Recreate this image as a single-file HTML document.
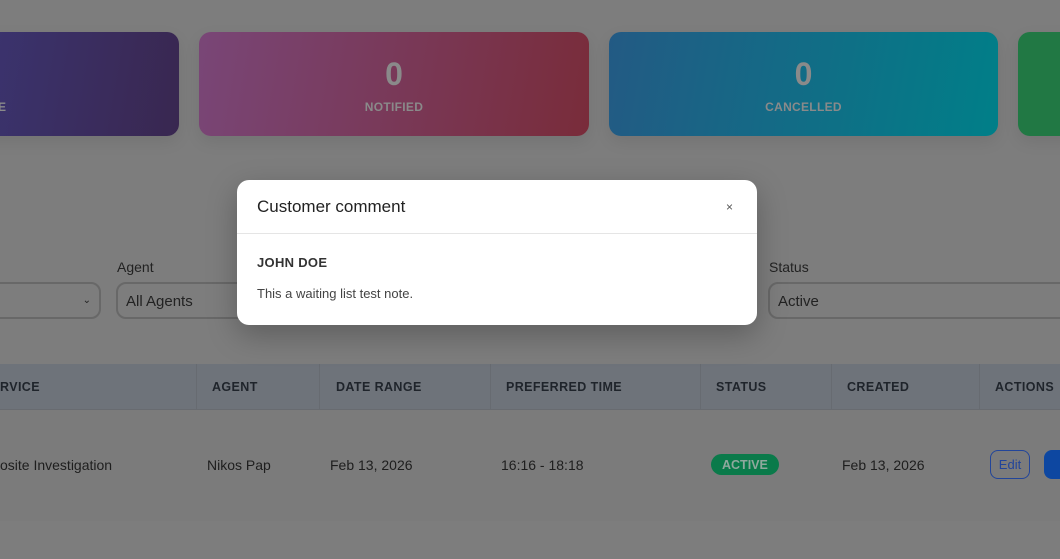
<!DOCTYPE html>
<html><head><style>
*{box-sizing:border-box;margin:0;padding:0}
body{width:1060px;height:559px;overflow:hidden;background:#7d7d7d;font-family:"Liberation Sans",sans-serif;position:relative}
.card{position:absolute;top:32px;height:104px;border-radius:12px;color:#8a8a8a;text-align:center;box-shadow:0 6px 16px rgba(0,0,0,.08)}
.card .n{font-size:32px;font-weight:bold;margin-top:24px;line-height:36px}
.card .l{font-size:12px;font-weight:bold;margin-top:8px;letter-spacing:.3px}
.lab{position:absolute;top:259px;font-size:14px;color:#222}
.sel{position:absolute;top:282px;height:37px;border:2px solid #686868;border-radius:10px;font-size:15px;color:#222;padding:9px 8px}
.th{position:absolute;top:364px;height:46px;left:0;width:1060px;background:#6e737a;border-bottom:1px solid #686b70}
.th span{position:absolute;top:16px;font-size:12.5px;font-weight:bold;color:#1f242b;letter-spacing:.4px}
.th i{position:absolute;top:0;width:1px;height:46px;background:#676b71}
.row{position:absolute;top:410px;height:111px;left:0;width:1060px;background:#7b7b7b}
.row span{position:absolute;top:47px;font-size:14px;color:#1e1e1e}
.modal{position:absolute;left:237px;top:180px;width:520px;height:145px;background:#fff;border-radius:12px;box-shadow:0 10px 30px rgba(0,0,0,.25)}
</style></head><body>
<div class="card" style="left:-20px;width:199px;background:linear-gradient(100deg,#3b3470,#392750)"><div class="l" style="margin-top:68px;text-align:left;padding-left:18px">E</div></div>
<div class="card" style="left:199px;width:390px;background:linear-gradient(100deg,#794677,#792c3a)"><div class="n">0</div><div class="l">NOTIFIED</div></div>
<div class="card" style="left:609px;width:389px;background:linear-gradient(100deg,#235a84,#007f88)"><div class="n">0</div><div class="l">CANCELLED</div></div>
<div class="card" style="left:1018px;width:60px;background:#217844"></div>

<div class="lab" style="left:117px">Agent</div>
<div class="lab" style="left:769px">Status</div>
<div class="sel" style="left:-20px;width:121px;text-align:right;font-size:10px;padding-top:11px">&#8964;</div>
<div class="sel" style="left:116px;width:140px">All Agents</div>
<div class="sel" style="left:768px;width:310px">Active</div>

<div class="th">
<span style="left:0">RVICE</span><i style="left:196px"></i>
<span style="left:212px">AGENT</span><i style="left:319px"></i>
<span style="left:336px">DATE RANGE</span><i style="left:490px"></i>
<span style="left:506px">PREFERRED TIME</span><i style="left:700px"></i>
<span style="left:716px">STATUS</span><i style="left:831px"></i>
<span style="left:847px">CREATED</span><i style="left:979px"></i>
<span style="left:995px">ACTIONS</span>
</div>
<div class="row">
<span style="left:0">osite Investigation</span>
<span style="left:207px">Nikos Pap</span>
<span style="left:330px">Feb 13, 2026</span>
<span style="left:501px">16:16 - 18:18</span>
<span style="left:711px;top:44px;background:#0a7a4a;font-weight:bold;font-size:12.5px;border-radius:12px;padding:4px 11px 3px;color:#8fa89d">ACTIVE</span>
<span style="left:842px">Feb 13, 2026</span>
<span style="left:990px;top:40px;border:1px solid #22459a;border-radius:8px;height:29px;width:40px;text-align:center;line-height:27px;font-size:13px;color:#22459a">Edit</span>
<span style="left:1044px;top:40px;background:#0d47a1;border-radius:8px;height:29px;width:30px"></span>
</div>

<div class="modal">
<div style="height:54px;border-bottom:1px solid #e5e5e5;padding:17px 20px;font-size:17px;color:#222">Customer comment<span style="position:absolute;right:24px;top:20px;font-size:12px;color:#555">×</span></div>
<div style="padding:21px 20px 0;font-size:13px;font-weight:bold;color:#333;letter-spacing:.3px">JOHN DOE</div>
<div style="padding:16px 20px 0;font-size:13px;color:#444">This a waiting list test note.</div>
</div>
</body></html>
